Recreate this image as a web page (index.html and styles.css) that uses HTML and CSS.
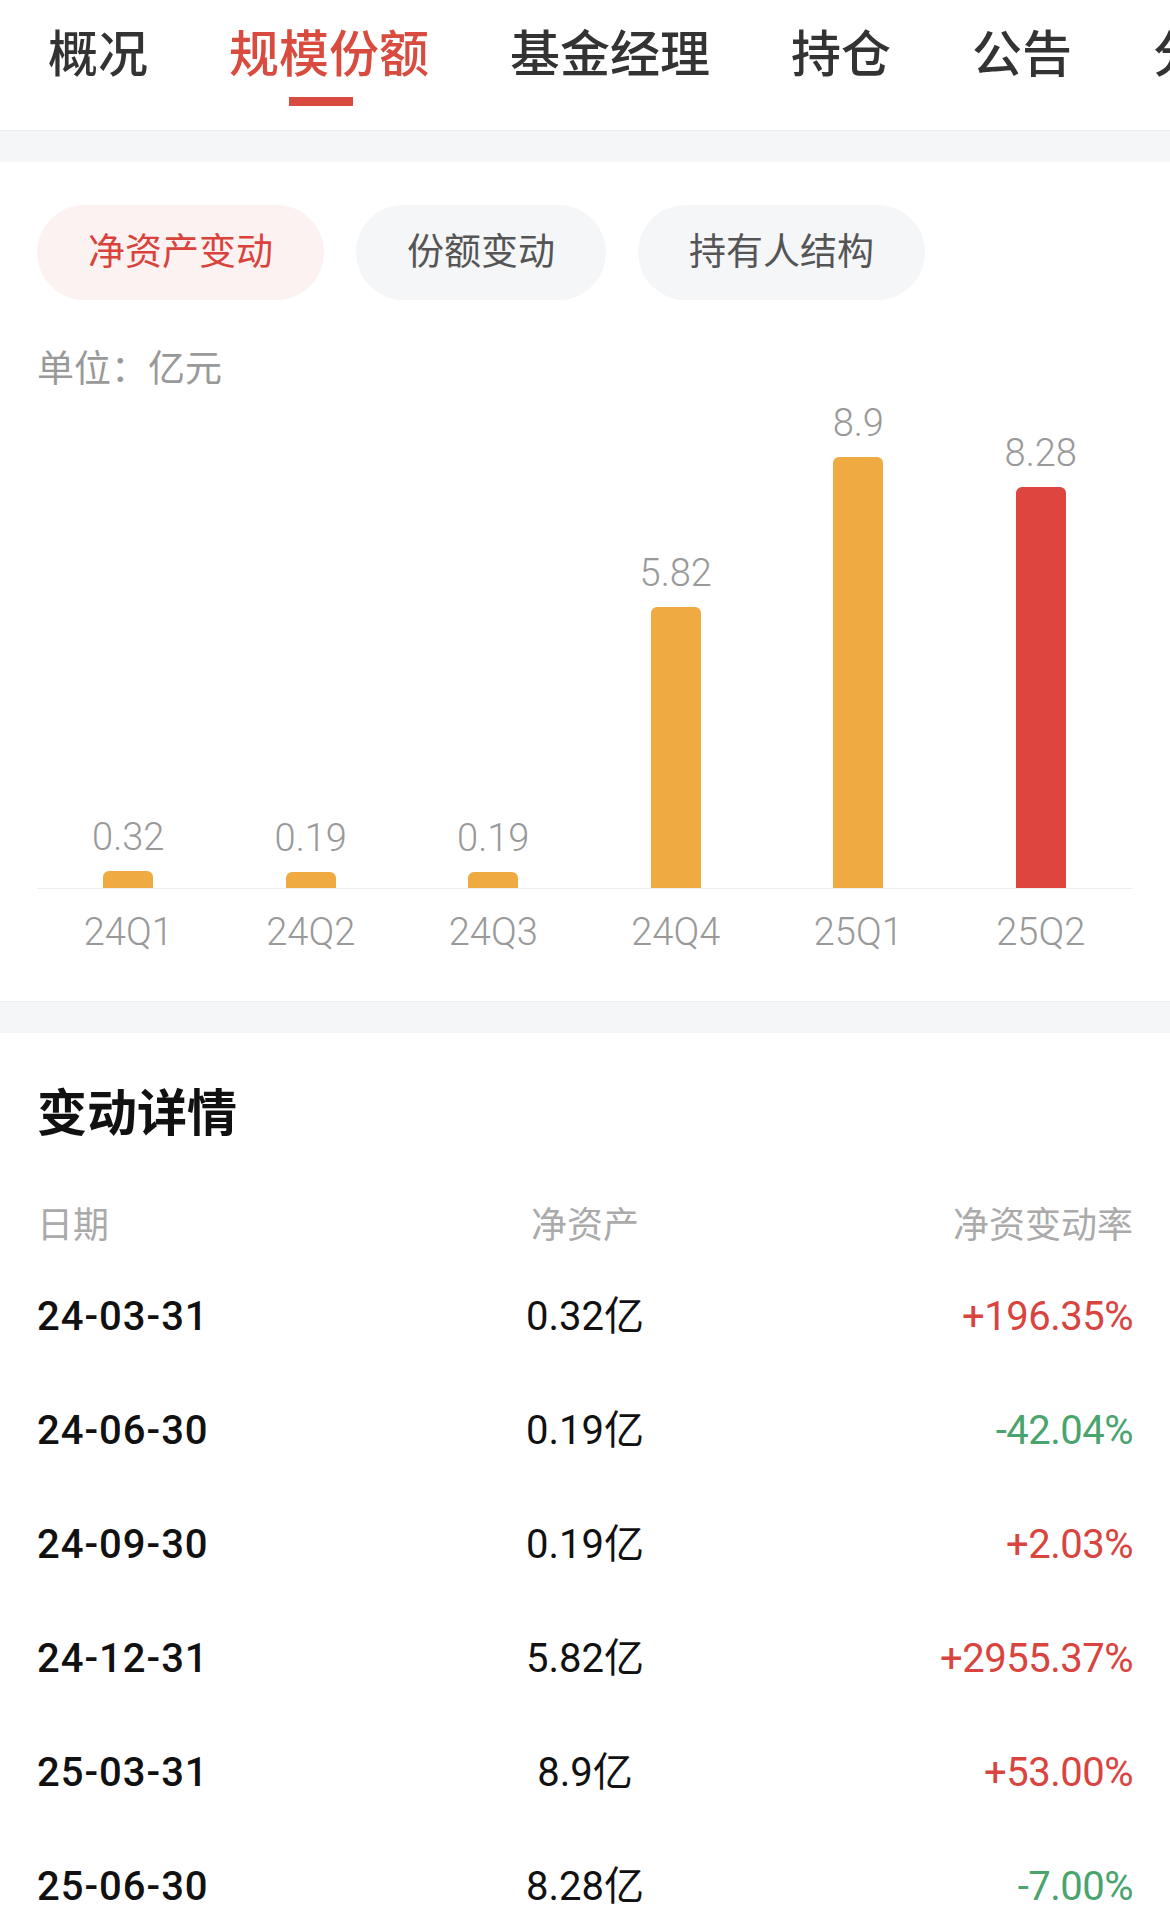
FILE: index.html
```html
<!DOCTYPE html>
<html lang="zh-CN">
<head>
    <meta charset="UTF-8">
    <meta name="viewport" content="width=device-width, initial-scale=1.0">
    <title>规模份额</title>
    <link rel="stylesheet" href="styles.css">
</head>
<body>
    <div class="tabs">
        <div class="tab">概况</div>
        <div class="tab active">规模份额<span class="tab-line"></span></div>
        <div class="tab">基金经理</div>
        <div class="tab">持仓</div>
        <div class="tab">公告</div>
        <div class="tab">分红</div>
    </div>
    <div class="divider"></div>

    <div class="chart-section">
        <div class="pills">
            <div class="pill active">净资产变动</div>
            <div class="pill">份额变动</div>
            <div class="pill">持有人结构</div>
        </div>
        <div class="unit">单位：亿元</div>
        <div class="chart">
            <div class="col"><div class="val">0.32</div><div class="bar" style="height: 17px"></div></div>
            <div class="col"><div class="val">0.19</div><div class="bar" style="height: 16px"></div></div>
            <div class="col"><div class="val">0.19</div><div class="bar" style="height: 16px"></div></div>
            <div class="col"><div class="val">5.82</div><div class="bar" style="height: 281px"></div></div>
            <div class="col"><div class="val">8.9</div><div class="bar" style="height: 431px"></div></div>
            <div class="col"><div class="val">8.28</div><div class="bar latest" style="height: 401px"></div></div>
        </div>
        <div class="axis">
            <div>24Q1</div>
            <div>24Q2</div>
            <div>24Q3</div>
            <div>24Q4</div>
            <div>25Q1</div>
            <div>25Q2</div>
        </div>
    </div>
    <div class="divider"></div>

    <div class="detail">
        <div class="title">变动详情</div>
        <div class="row head">
            <span>日期</span>
            <span>净资产</span>
            <span>净资变动率</span>
        </div>
        <div class="row">
            <span class="date">24-03-31</span>
            <span class="amount">0.32亿</span>
            <span class="rate up">+196.35%</span>
        </div>
        <div class="row">
            <span class="date">24-06-30</span>
            <span class="amount">0.19亿</span>
            <span class="rate down">-42.04%</span>
        </div>
        <div class="row">
            <span class="date">24-09-30</span>
            <span class="amount">0.19亿</span>
            <span class="rate up">+2.03%</span>
        </div>
        <div class="row">
            <span class="date">24-12-31</span>
            <span class="amount">5.82亿</span>
            <span class="rate up">+2955.37%</span>
        </div>
        <div class="row">
            <span class="date">25-03-31</span>
            <span class="amount">8.9亿</span>
            <span class="rate up">+53.00%</span>
        </div>
        <div class="row">
            <span class="date">25-06-30</span>
            <span class="amount">8.28亿</span>
            <span class="rate down">-7.00%</span>
        </div>
    </div>
</body>
</html>
```

FILE: styles.css
```css
body {
    margin: 0;
    background-color: #fff;
    font-family: Roboto, "Noto Sans CJK SC", sans-serif;
    overflow: hidden;
}
.tabs {
    display: flex;
    align-items: flex-start;
    gap: 81px;
    height: 130px;
    padding: 30px 0 0 48px;
    box-sizing: border-box;
    white-space: nowrap;
    overflow: hidden;
}
.tab {
    display: flex;
    flex-direction: column;
    align-items: center;
    flex-shrink: 0;
    font-size: 50px;
    line-height: 50px;
    font-weight: 500;
    color: #333;
}
.tab.active {
    color: #d94b3e;
}
.tab-line {
    width: 64px;
    height: 9px;
    margin-top: 17px;
    margin-right: 17px;
    background-color: #d94b3e;
}
.divider {
    height: 31px;
    background-color: #f5f6f8;
    border-top: 1px solid #eeeff1;
}
.chart-section {
    padding: 43px 38px 50px 37px;
}
.pills {
    display: flex;
    gap: 32px;
}
.pill {
    height: 95px;
    line-height: 95px;
    padding: 0 51px;
    border-radius: 48px;
    font-size: 37px;
    color: #555;
    background-color: #f5f6f8;
}
.pill.active {
    color: #d8433c;
    background-color: #fdf2f2;
}
.unit {
    margin-top: 52px;
    font-size: 37px;
    line-height: 36px;
    color: #999;
}
.chart {
    display: grid;
    grid-template-columns: repeat(6, 1fr);
    align-items: end;
    margin-top: 16px;
    border-bottom: 1px solid #eee;
}
.col {
    display: flex;
    flex-direction: column;
    align-items: center;
}
.val {
    margin-bottom: 15px;
    font-size: 38px;
    line-height: 38px;
    font-weight: 300;
    color: #999;
}
.bar {
    width: 50px;
    border-radius: 6px 6px 0 0;
    background-color: #f0aa42;
}
.bar.latest {
    background-color: #df453f;
}
.axis {
    display: grid;
    grid-template-columns: repeat(6, 1fr);
    margin-top: 24px;
    text-align: center;
    font-size: 38px;
    line-height: 38px;
    font-weight: 300;
    color: #999;
}
.detail {
    padding: 56px 37px 0 37px;
}
.title {
    font-size: 50px;
    line-height: 50px;
    font-weight: 700;
    color: #111;
}
.row {
    display: grid;
    grid-template-columns: 1fr 1fr 1fr;
    align-items: center;
    height: 114px;
    font-size: 40px;
    line-height: 40px;
    color: #111;
}
.row span:nth-child(2) {
    text-align: center;
}
.row span:nth-child(3) {
    text-align: right;
}
.row.head {
    height: 36px;
    margin: 69px 0 16px 0;
    font-size: 36px;
    line-height: 36px;
    color: #aaa;
}
.date {
    font-weight: 500;
    letter-spacing: 1px;
}
.rate {
    letter-spacing: -0.5px;
}
.rate.up {
    color: #d9443f;
}
.rate.down {
    color: #4aa46e;
}
```
